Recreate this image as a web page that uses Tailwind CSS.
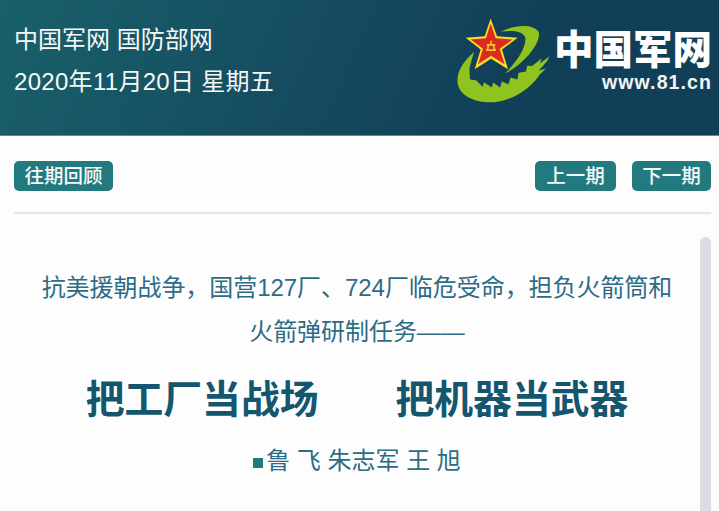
<!DOCTYPE html>
<html lang="zh-CN">
<head>
    <meta charset="UTF-8">
    <script src="https://cdn.jsdelivr.net/npm/@tailwindcss/browser@4"></script>
    <title>中国军网</title>
</head>
<body class="bg-[#fdfdfe] font-['Liberation_Sans','Noto_Sans_CJK_SC',sans-serif] overflow-hidden">
    <div class="w-[719px] h-[511px] overflow-hidden">
        <!-- Header -->
        <header class="h-[136px] flex justify-between bg-linear-[115deg] from-[#19606a] to-[#123f58] to-70% border-b border-[#5f8a96]">
            <div class="pl-[14px] pt-[19px] text-[24px] leading-[42px] text-[#f6f8f8]">
                <div>中国军网 国防部网</div>
                <div class="tracking-[0.3px]">2020年11月20日 星期五</div>
            </div>
            <div class="flex items-start">
                <svg class="w-[110px] h-[107px]" viewBox="0 0 330 320">
                    <path d="M102 155C70 185 48 215 53 250C60 290 110 310 165 306C225 300 280 255 300 222L318 205L296 212L322 182L328 168L300 190L305 175L275 198L262 196L258 214L236 218L232 238L212 232L205 252L186 244L180 262L160 247L155 262L132 246L128 260L108 240L90 238L88 205Z" fill="#8fc31f"/>
                    <path d="M182 95C225 72 280 72 296 95C305 125 255 190 195 220C235 180 262 135 255 110C245 92 215 90 182 95Z" fill="#8fc31f"/>
                    <polygon points="152,55 171,108 233,113 186,148 204,207 153,176 104,207 122,148 77,113 134,108" fill="#f6e025"/>
                    <polygon points="152,70 167,114 218,118 179,146 194,192 153,167 114,192 129,146 92,118 138,114" fill="#dc2a1e"/>
                    <path d="M140 134H166M153 122V134M138 150H168M146 134L142 150M160 134L164 150" stroke="#f6c825" stroke-width="5" fill="none"/>
                </svg>
                <div class="w-[169px] pt-[26px] pr-[7px] text-right text-white">
                    <div class="text-[39.5px] leading-[42px] font-black font-['Noto_Sans_CJK_SC',sans-serif] whitespace-nowrap">中国军网</div>
                    <div class="mt-[4px] text-[19.5px] leading-[20px] font-bold tracking-[1.1px] whitespace-nowrap text-[#f3f5f6]">www.81.cn</div>
                </div>
            </div>
        </header>

        <!-- Toolbar -->
        <div class="mx-[8px] ml-[14px] pt-[25px] pb-[21px] flex justify-between border-b-2 border-[#e4e6ee]">
            <button class="h-[30px] w-[99px] rounded-[5px] bg-[#237a7e] text-[19.5px] leading-[30px] font-medium text-[#f5f8f8]">往期回顾</button>
            <div class="flex gap-[16px]">
                <button class="h-[30px] w-[81px] rounded-[5px] bg-[#237a7e] text-[19.5px] leading-[30px] font-medium text-[#f5f8f8]">上一期</button>
                <button class="h-[30px] w-[79px] rounded-[5px] bg-[#237a7e] text-[19.5px] leading-[30px] font-medium text-[#f5f8f8]">下一期</button>
            </div>
        </div>

        <!-- Article -->
        <div class="flex ml-[14px] mr-[8px] pt-[23px]">
            <div class="w-[686px] text-center">
                <p class="pt-[29px] text-[24px] leading-[44px] text-[#2c6c85] tracking-[-0.05px]">抗美援朝战争，国营127厂、724厂临危受命，担负火箭筒和<br>火箭弹研制任务——</p>
                <h1 class="mt-[21px] flex justify-center gap-[77px] text-[38.8px] leading-[50px] font-bold text-[#14566e] whitespace-nowrap">
                    <span>把工厂当战场</span>
                    <span>把机器当武器</span>
                </h1>
                <div class="mt-[18px] flex justify-center items-center text-[24px] leading-[36px] text-[#2c6c85]">
                    <span class="w-[10px] h-[10px] bg-[#237a7e] mt-[3px] mr-[3px]"></span>
                    <span>鲁 飞 朱志军 王 旭</span>
                </div>
            </div>
            <div class="w-[11px] h-[300px] rounded-full bg-[#dcdde2]"></div>
        </div>
    </div>
</body>
</html>
